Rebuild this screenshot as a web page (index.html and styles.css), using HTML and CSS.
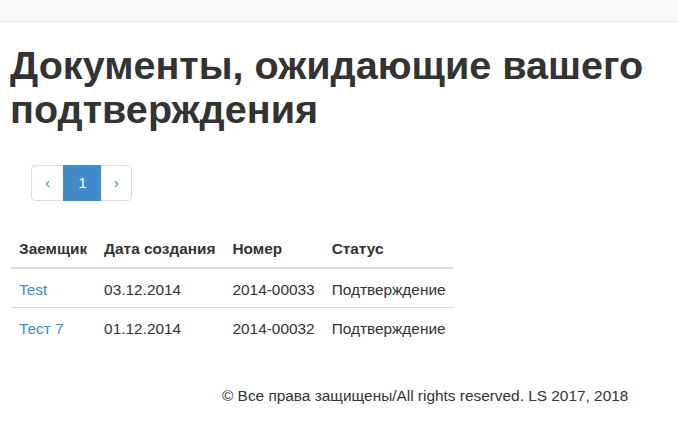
FILE: index.html
```html
<!DOCTYPE html>
<html lang="ru">
<head>
<meta charset="utf-8">
<title>Документы</title>
<link rel="stylesheet" href="styles.css">
</head>
<body>
<div class="navbar"></div>
<div class="container">
  <h1 class="title">Документы, ожидающие вашего подтверждения</h1>
  <ul class="pagination">
    <li class="page"><span>&lsaquo;</span></li>
    <li class="page active"><span>1</span></li>
    <li class="page"><span>&rsaquo;</span></li>
  </ul>
  <table class="docs">
    <thead>
      <tr><th>Заемщик</th><th>Дата создания</th><th>Номер</th><th>Статус</th></tr>
    </thead>
    <tbody>
      <tr><td><a href="#">Test</a></td><td>03.12.2014</td><td>2014-00033</td><td>Подтверждение</td></tr>
      <tr><td><a href="#">Тест 7</a></td><td>01.12.2014</td><td>2014-00032</td><td>Подтверждение</td></tr>
    </tbody>
  </table>
</div>
<footer class="footer">© Все права защищены/All rights reserved. LS 2017, 2018</footer>
</body>
</html>
```
FILE: styles.css
```css
html, body {
  margin: 0;
  padding: 0;
  background: #fff;
}
body {
  font-family: "Liberation Sans", Arial, Helvetica, sans-serif;
  font-size: 15.4px;
  line-height: 21px;
  color: #333;
}
.navbar {
  height: 21px;
  background: #f8f8f8;
  border-bottom: 1px solid #e7e7e7;
}
.container {
  padding: 0 10px;
}
.title {
  margin: 21px 0 0;
  font-size: 39.6px;
  line-height: 44px;
  font-weight: bold;
  color: #333;
}
.pagination {
  display: flex;
  list-style: none;
  margin: 34px 0 0 21px;
  padding: 0;
}
.page span {
  display: block;
  height: 34px;
  line-height: 34px;
  padding: 0 13px;
  border: 1px solid #ddd;
  margin-left: -1px;
  color: #428bca;
  background: #fff;
}
.page:first-child span {
  margin-left: 0;
  border-radius: 4px 0 0 4px;
}
.page:last-child span {
  border-radius: 0 4px 4px 0;
  padding: 0 12px 0 13px;
}
.page.active span {
  background: #428bca;
  border-color: #428bca;
  color: #fff;
  padding: 0 13px 0 14px;
  position: relative;
}
.docs {
  margin: 29px 0 0 1px;
  border-collapse: collapse;
  border-spacing: 0;
}
.docs th, .docs td {
  padding: 8px;
  text-align: left;
  vertical-align: top;
  white-space: nowrap;
}
.docs th:first-child, .docs td:first-child,
.docs th:nth-child(2), .docs td:nth-child(2) {
  padding-right: 9px;
}
.docs th:nth-child(3), .docs td:nth-child(3) {
  padding-right: 9px;
}
.docs th {
  font-weight: bold;
  border-bottom: 2px solid #ddd;
}
.docs td {
  padding-top: 10px;
  padding-bottom: 7px;
}
.docs tbody tr + tr td {
  border-top: 1px solid #ddd;
}
.docs a {
  color: #428bca;
  text-decoration: none;
}
.footer {
  margin-top: 39px;
  padding-left: 222px;
  line-height: 22px;
}
```
